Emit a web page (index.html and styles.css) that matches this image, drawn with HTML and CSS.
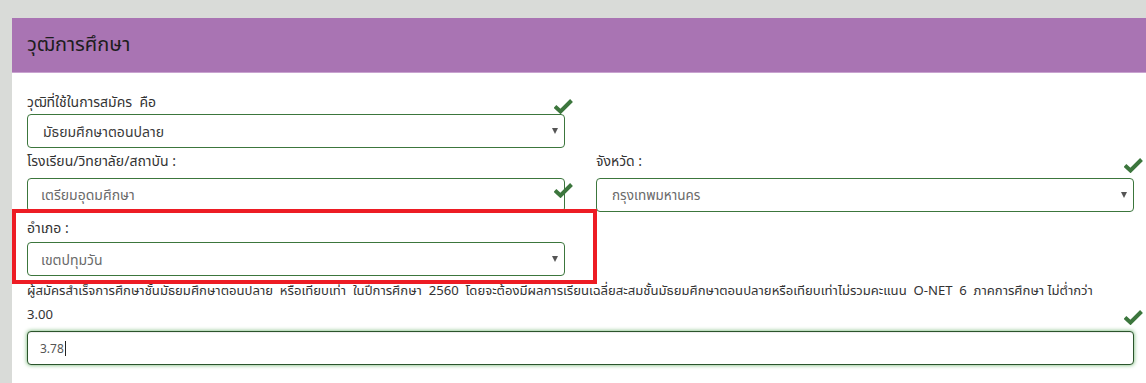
FILE: index.html
```html
<!doctype html>
<html>

<head>
	<meta charset="utf-8">
	<title>วุฒิการศึกษา</title>
	<link rel="stylesheet" href="styles.css">
</head>

<body>
	<div class="panel">
		<div class="panel-heading">
			<h3>วุฒิการศึกษา</h3>
		</div>
		<div class="panel-body">
			<div class="row row-one">
				<div class="field">
					<label>วุฒิที่ใช้ในการสมัคร&nbsp; คือ</label>
					<div class="control check-a">
						<select class="form-control"><option>มัธยมศึกษาตอนปลาย</option></select>
						<span class="arrow"></span>
						<svg class="ok" viewBox="0 0 19 15"><path d="M1 7.5 L6.5 12.5 L17.5 1.5"/></svg>
					</div>
				</div>
			</div>
			<div class="row row-two">
				<div class="field">
					<label>โรงเรียน/วิทยาลัย/สถาบัน :</label>
					<div class="control check-b">
						<input class="form-control light" type="text" value="เตรียมอุดมศึกษา">
						<svg class="ok" viewBox="0 0 19 15"><path d="M1 7.5 L6.5 12.5 L17.5 1.5"/></svg>
					</div>
				</div>
				<div class="field">
					<label>จังหวัด :</label>
					<div class="control check-c">
						<select class="form-control light small"><option>กรุงเทพมหานคร</option></select>
						<span class="arrow"></span>
						<svg class="ok" viewBox="0 0 19 15"><path d="M1 7.5 L6.5 12.5 L17.5 1.5"/></svg>
					</div>
				</div>
			</div>
			<div class="row row-three">
				<div class="field">
					<label>อำเภอ :</label>
					<div class="control">
						<select class="form-control light"><option>เขตปทุมวัน</option></select>
						<span class="arrow"></span>
					</div>
				</div>
			</div>
			<p class="note">ผู้สมัครสำเร็จการศึกษาชั้นมัธยมศึกษาตอนปลาย&nbsp; หรือเทียบเท่า&nbsp; ในปีการศึกษา&nbsp; 2560&nbsp; โดยจะต้องมีผลการเรียนเฉลี่ยสะสมชั้นมัธยมศึกษาตอนปลายหรือเทียบเท่าไม่รวมคะแนน&nbsp; O-NET&nbsp; 6&nbsp; ภาคการศึกษา&nbsp;ไม่ต่ำกว่า<br>3.00</p>
			<div class="control check-d">
				<div class="form-control focus">3.78<span class="cursor"></span></div>
				<svg class="ok" viewBox="0 0 19 15"><path d="M1 7.5 L6.5 12.5 L17.5 1.5"/></svg>
			</div>
		</div>
		<div class="mark"></div>
	</div>
</body>

</html>
```

FILE: styles.css
```css
* {
	margin: 0;
	padding: 0;
	box-sizing: border-box;
}

body {
	background: #d9dbd8;
	font-family: "Noto Sans", "Noto Sans Thai", "Liberation Sans", sans-serif;
	color: #333;
	overflow: hidden;
}

.panel {
	position: relative;
	margin: 18px 0 0 12px;
	background: #fff;
	height: 365px;
}

.panel-heading {
	height: 55px;
	background: #a974b3;
	border-bottom: 1px solid #c9a3d0;
	padding-left: 15px;
	display: flex;
	align-items: center;
}

.panel-heading h3 {
	font-size: 20px;
	font-weight: normal;
	color: #1d1d1d;
}

.panel-body {
	padding: 19px 12px 0 15px;
}

.row {
	display: grid;
	grid-template-columns: 538px 538px;
	column-gap: 31px;
}

.row-two {
	margin-top: 3px;
}

.row-three {
	margin-top: 6px;
}

label {
	display: block;
	font-size: 14px;
	line-height: 20px;
	color: #333;
}

.row-one label {
	margin-bottom: 2px;
}

.row-two label {
	margin-bottom: 7px;
}

.row-three label {
	margin-bottom: 4px;
}

.control {
	position: relative;
}

.form-control {
	display: block;
	width: 100%;
	height: 34px;
	padding: 0 12px 0 15px;
	font-family: inherit;
	font-size: 14px;
	color: #3a3a3a;
	background: #fff;
	border: 1px solid #3c763d;
	border-radius: 4px;
	outline: none;
	appearance: none;
	-webkit-appearance: none;
}

.form-control.light {
	padding-left: 13px;
	color: #6a6a6a;
}

.form-control.small {
	padding-left: 15px;
	font-size: 13.5px;
}

.arrow {
	position: absolute;
	right: 7px;
	top: 14px;
	border-left: 3.5px solid transparent;
	border-right: 3.5px solid transparent;
	border-top: 6px solid #555;
}

.ok {
	position: absolute;
	width: 19px;
	height: 15px;
	right: -8px;
	fill: none;
	stroke: #3c763d;
	stroke-width: 4;
}

.check-a .ok {
	top: -15px;
}

.check-b .ok {
	top: 5px;
}

.check-c .ok {
	top: -20px;
	right: -9px;
}

.check-d .ok {
	top: -21px;
	right: -9px;
}

.note {
	margin: 2px 0 5px;
	font-size: 13.1px;
	line-height: 24px;
	color: #333;
}

.form-control.focus {
	display: flex;
	align-items: center;
	padding-left: 12px;
	font-size: 12px;
	color: #555;
	border-color: #2b542c;
	box-shadow: inset 0 1px 1px rgba(0, 0, 0, .075), 0 0 4px #67b168;
}

.cursor {
	display: inline-block;
	width: 1px;
	height: 15px;
	margin-left: 1px;
	background: #222;
}

.mark {
	position: absolute;
	left: 0;
	top: 191px;
	width: 585px;
	height: 75px;
	border: 4px solid #ed1c24;
}
```
